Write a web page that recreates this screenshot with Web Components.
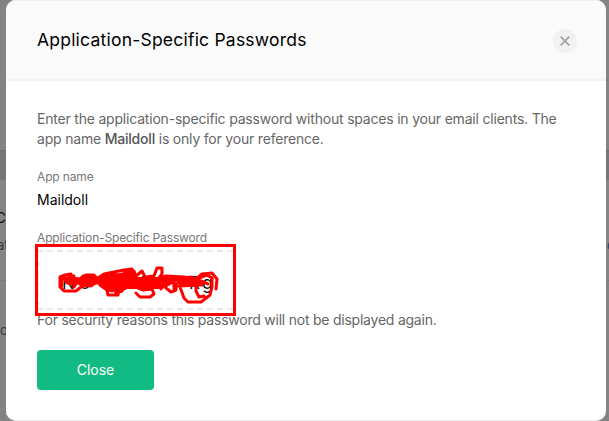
<!DOCTYPE html>
<html lang="en"><head><meta charset="utf-8"><title>Application-Specific Passwords</title>
<style>html,body{margin:0;width:609px;height:421px;overflow:hidden;background:#838383;font-family:Inter,"Liberation Sans",sans-serif}</style></head>
<body><password-page></password-page>
<script>
const define=(name,html)=>customElements.define(name,class extends HTMLElement{
  constructor(){super();this.attachShadow({mode:'open'}).innerHTML=html}
});
define('page-backdrop',`<style>
:host{position:absolute;inset:0;background:#838383;overflow:hidden}
.band{margin-top:150px;height:30px;background:#767678;box-sizing:border-box;border-top:1px solid #707070}
.section{height:100px;border-bottom:1px solid #7b7b7b;background:#858585}
span{position:absolute;white-space:nowrap;line-height:20px}
.c{left:-5px;top:208px;font-size:15px;color:#111}.a{left:-3px;top:235px;font-size:13px;color:#393939}
.g{left:-8px;top:320px;font-size:13px;color:#393939}.r{left:607px;top:235px;font-size:13px;color:#254263}
</style><div class="band"></div><div class="section"></div><span class="c">C</span><span class="a">at</span><span class="g">go</span><span class="r">c</span>`);
define('close-icon',`<style>:host{display:block;width:24px;height:24px}svg{display:block}</style>
<svg width="24" height="24" viewBox="0 0 24 24"><circle cx="12" cy="12" r="12" fill="#f1f1f1"/><path d="M7.7 7.7L16.3 16.3M16.3 7.7L7.7 16.3" stroke="#a5a5a5" stroke-width="1.8"/></svg>`);
define('dialog-header',`<style>
:host{display:flex;align-items:center;justify-content:space-between;box-sizing:border-box;height:81px;padding:1px 29px 0 31px;background:#fafafa;border-top:1px solid #efefef;border-bottom:2px solid #f3f3f3}
h1{margin:-2px 0 0;font-size:17.5px;font-weight:400;line-height:24px;letter-spacing:.22px;color:#000;white-space:nowrap}
</style><h1><slot></slot></h1><close-icon></close-icon>`);
define('field-label',`<style>:host{display:block;font-size:12px;line-height:16px;color:#777;white-space:nowrap;letter-spacing:-.14px}</style><slot></slot>`);
define('action-button',`<style>:host{display:block;width:117px;height:40px}
button{width:117px;height:40px;border:0;border-radius:4px;background:#13bb84;color:#fff;font:400 14px/40px Inter,sans-serif;padding:0}</style><button><slot></slot></button>`);
define('secret-box',`<style>
:host{display:block;position:relative;width:201px;height:73px}
svg{display:block;overflow:visible}</style>
<svg width="201" height="73" viewBox="35 244 201 73" fill="none">
<path d="M37 251H233M37 309H233" stroke="#e8e8e8" stroke-width="2" stroke-dasharray="6 4"/>
<path d="M38.5 251V309" stroke="#e8e8e8" stroke-width="1" stroke-dasharray="6 4"/>
<text x="62" y="289" font-size="17" fill="#111">N</text><text x="80" y="289" font-size="17" fill="#111">5</text><text x="139" y="289" font-size="17" fill="#111">2</text><text x="189" y="289" font-size="17" fill="#111">R</text><text x="202" y="289" font-size="18" fill="#111">g</text>
<rect x="36.5" y="245.5" width="198" height="69" stroke="#f00" stroke-width="3"/>
<g stroke="#f00" stroke-width="3" stroke-linecap="round" stroke-linejoin="round">
<path d="M60 277V287L64 291H76L81 287L86 285M60 277L65 275L71 274L74 281L70 284L64 279L74 276L74 287L78 280L86 275L94 275L98 281L91 286L81 285L78 281L88 277L98 278L93 283L84 284"/>
<path d="M61 278V286M64 278L70 283L77 279" stroke-width="4"/>
<path d="M77 281H99M68 281H78M84 278H94" stroke-width="7"/>
<path d="M98 278L104 274L114 272L124 270L132 269L134 275L128 280L124 287L119 290L118 295H108L107 290L100 285L98 278L110 275L121 275L127 280L119 286L108 285L101 279L113 278L126 281L117 288L106 286L106 277L117 275L122 285L112 291L104 282L128 274L133 280L124 289L116 293L111 282L108 278"/>
<path d="M111 278L130 274M105 281L127 278M103 284L128 283M108 289L124 287M115 276L111 289M126 273L121 290" stroke-width="6"/>
<path d="M126 278L130 271H134L136 276L142 271L145 277L154 276L157 268H162V274L158 279L166 276L184 277L201 281L208 284"/>
<path d="M123 280H166M125 283H168M128 286H162M134 279L151 285M146 279L160 286" stroke-width="6"/>
<path d="M162 279L180 280L202 283" stroke-width="4"/>
<path d="M136 293L140 297H150L154 294L152 289L143 290L136 287M166 278V288L171 292L176 290V284L168 282L174 278V291M161 279V289"/>
<path d="M174 279L192 277L196 281L189 284L178 283M180 287L184 298L188 302H201L210 295L212 287V278L207 275L199 278L196 284V291L199 297L204 296M197 278L202 274L212 273L217 279L216 289M178 286L202 285"/>
</g></svg>`);
define('password-dialog',`<style>
:host{position:absolute;left:6px;top:0;width:600px;height:421px;box-sizing:border-box;border-radius:10px;overflow:hidden;background:#fff;border-bottom:1px solid #ececec}
main{display:flex;flex-direction:column;padding:28px 31px 0}
p{margin:0;font-size:14px;line-height:20px;color:#666;white-space:nowrap;letter-spacing:-.2px}
b{font-weight:500;color:#555}.app{margin-top:20px}.name{color:#000;margin-top:5px;letter-spacing:0}.secret{margin-top:20px}
secret-box{margin:-2px 0 0 -2px}.note{margin-top:-7px;letter-spacing:-.23px}action-button{margin-top:20px}
</style><dialog-header>Application-Specific Passwords</dialog-header><main>
<p class="l1">Enter the application-specific password without spaces in your email clients. The</p>
<p class="l2">app name <b>Maildoll</b> is only for your reference.</p>
<field-label class="app">App name</field-label><p class="name">Maildoll</p>
<field-label class="secret">Application-Specific Password</field-label><secret-box></secret-box>
<p class="note">For security reasons this password will not be displayed again.</p><action-button>Close</action-button></main>`);
define('password-page',`<style>:host{display:block;position:relative;width:609px;height:421px;overflow:hidden}</style><page-backdrop></page-backdrop><password-dialog></password-dialog>`);
</script></body></html>
